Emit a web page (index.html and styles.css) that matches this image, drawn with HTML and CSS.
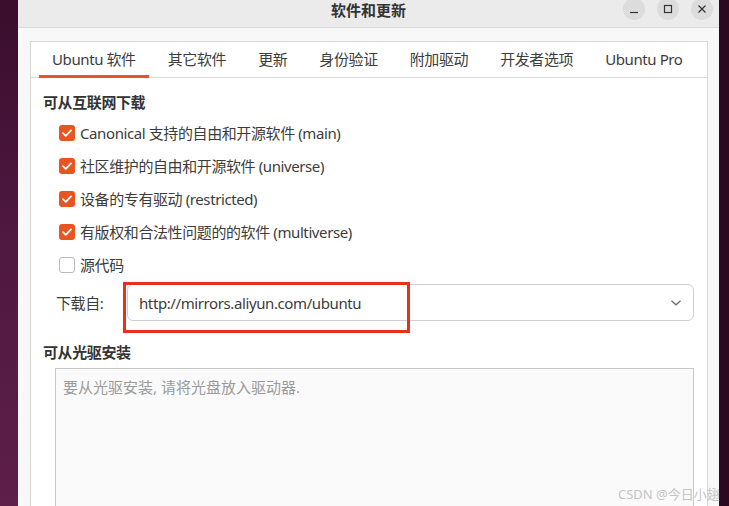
FILE: index.html
```html
<!DOCTYPE html>
<html lang="zh-CN">
<head>
  <meta charset="UTF-8">
  <title>软件和更新</title>
  <link rel="stylesheet" href="styles.css">
</head>
<body>

  <div class="desk-left"></div>

  <div class="window">
    <div class="titlebar">
      <div></div>
      <div class="title">软件和更新</div>
      <div class="controls">
        <span class="ctl">
          <svg width="10" height="10" viewBox="0 0 10 10"><path d="M1 8.5h8" stroke="#333" stroke-width="1.2"/></svg>
        </span>
        <span class="ctl">
          <svg width="10" height="10" viewBox="0 0 10 10"><rect x="1.5" y="1.5" width="7" height="7" fill="none" stroke="#333" stroke-width="1.2"/></svg>
        </span>
        <span class="ctl">
          <svg width="10" height="10" viewBox="0 0 10 10"><path d="M1.5 1.5l7 7M8.5 1.5l-7 7" stroke="#333" stroke-width="1.2"/></svg>
        </span>
      </div>
    </div>

    <div class="window-body">
      <div class="notebook">
        <div class="tabs">
          <div class="tab active">Ubuntu 软件</div>
          <div class="tab">其它软件</div>
          <div class="tab">更新</div>
          <div class="tab">身份验证</div>
          <div class="tab">附加驱动</div>
          <div class="tab">开发者选项</div>
          <div class="tab">Ubuntu Pro</div>
        </div>

        <div class="page">
          <div class="heading">可从互联网下载</div>
          <div class="checks">
            <div class="check-row"><span class="box on"><svg width="16" height="16" viewBox="0 0 16 16"><path d="M4 8.2l2.8 2.6L12 5.4" fill="none" stroke="#fff" stroke-width="1.8" stroke-linecap="round" stroke-linejoin="round"/></svg></span>Canonical 支持的自由和开源软件 (main)</div>
            <div class="check-row"><span class="box on"><svg width="16" height="16" viewBox="0 0 16 16"><path d="M4 8.2l2.8 2.6L12 5.4" fill="none" stroke="#fff" stroke-width="1.8" stroke-linecap="round" stroke-linejoin="round"/></svg></span>社区维护的自由和开源软件 (universe)</div>
            <div class="check-row"><span class="box on"><svg width="16" height="16" viewBox="0 0 16 16"><path d="M4 8.2l2.8 2.6L12 5.4" fill="none" stroke="#fff" stroke-width="1.8" stroke-linecap="round" stroke-linejoin="round"/></svg></span>设备的专有驱动 (restricted)</div>
            <div class="check-row"><span class="box on"><svg width="16" height="16" viewBox="0 0 16 16"><path d="M4 8.2l2.8 2.6L12 5.4" fill="none" stroke="#fff" stroke-width="1.8" stroke-linecap="round" stroke-linejoin="round"/></svg></span>有版权和合法性问题的的软件 (multiverse)</div>
            <div class="check-row"><span class="box"></span>源代码</div>
          </div>

          <div class="source-row">
            <span class="source-label">下载自:</span>
            <div class="combo">
              <span>http://mirrors.aliyun.com/ubuntu</span>
              <svg width="12" height="8" viewBox="0 0 12 8"><path d="M1.5 1.8l4.5 4 4.5-4" fill="none" stroke="#6a6a6a" stroke-width="1.3"/></svg>
            </div>
          </div>

          <div class="heading cd-heading">可从光驱安装</div>
          <div class="cd-box">要从光驱安装, 请将光盘放入驱动器.</div>
        </div>
      </div>
    </div>
  </div>

  <div class="desk-right"></div>

  <!-- annotation drawn over the screenshot -->
  <div class="mark"></div>
  <div class="watermark">CSDN @今日小翅</div>

</body>
</html>
```

FILE: styles.css
```css
body {
  margin: 0;
  width: 729px;
  height: 506px;
  overflow: hidden;
  display: flex;
  position: relative;
  font-family: 'Noto Sans', 'Noto Sans CJK SC', sans-serif;
  font-size: 15px;
  letter-spacing: -0.4px;
  color: #3c3c3c;
  background-color: #2c0b22;
}

.desk-left {
  width: 18px;
  flex-shrink: 0;
  background: linear-gradient(180deg, #3a0d2c 0%, #4e1840 45%, #5e1f4a 100%);
}

.desk-right {
  width: 10px;
  flex-shrink: 0;
  background-color: #2b0a21;
}

.window {
  width: 701px;
  flex-shrink: 0;
  display: flex;
  flex-direction: column;
  background-color: #f8f8f8;
}

.titlebar {
  height: 27px;
  flex-shrink: 0;
  display: grid;
  grid-template-columns: 1fr auto 1fr;
  background-color: #ebebeb;
  border-bottom: 1px solid #d9d9d9;
}

.title {
  font-weight: bold;
  font-size: 15px;
  letter-spacing: 0;
  line-height: 20px;
  color: #333;
}

.controls {
  justify-self: end;
  display: flex;
  gap: 12px;
  margin: -2px 6px 0 0;
}

.ctl {
  width: 22px;
  height: 22px;
  border-radius: 50%;
  background-color: #dcdcdc;
  display: flex;
  align-items: center;
  justify-content: center;
}

.window-body {
  flex: 1;
  min-height: 0;
  display: flex;
  flex-direction: column;
  padding: 13px 11px 0 12px;
}

.notebook {
  flex: 1;
  min-height: 0;
  overflow: hidden;
  background-color: #fff;
  border: 1px solid #d6d6d6;
  border-bottom: none;
}

.tabs {
  display: flex;
  gap: 6px;
  padding: 0 8px;
  border-bottom: 1px solid #dadada;
}

.tab {
  position: relative;
  padding: 0 13px;
  line-height: 35px;
  white-space: nowrap;
}

.tab.active::after {
  content: "";
  position: absolute;
  left: 0;
  right: 0;
  bottom: -1px;
  height: 3px;
  background-color: #e95420;
}

.page {
  padding: 14px 13px 0 12px;
}

.heading {
  font-weight: bold;
  line-height: 20px;
  color: #333;
}

.checks {
  margin-top: 4px;
}

.check-row {
  height: 33px;
  display: flex;
  align-items: center;
  padding-left: 16px;
  white-space: nowrap;
}

.box {
  width: 16px;
  height: 16px;
  margin-right: 5px;
  border-radius: 3px;
  box-sizing: border-box;
  border: 1px solid #bcbcbc;
  background-color: #fff;
  display: flex;
}

.box.on {
  border: none;
  background-color: #e95420;
}

.source-row {
  display: flex;
  align-items: center;
  margin-top: 3px;
}

.source-label {
  width: 84px;
  padding-left: 13px;
  box-sizing: border-box;
  flex-shrink: 0;
}

.combo {
  flex: 1;
  height: 37px;
  box-sizing: border-box;
  border: 1px solid #cfcfcf;
  border-radius: 6px;
  background-color: #fff;
  display: flex;
  align-items: center;
  justify-content: space-between;
  padding: 0 11px 0 11px;
}

.cd-heading {
  margin-top: 21px;
}

.cd-box {
  margin: 6px 0 0 12px;
  height: 160px;
  background-color: #fafafa;
  border: 1px solid #c9c9c9;
  padding: 8px 7px;
  font-size: 15px;
  letter-spacing: 0;
  line-height: 20px;
  color: #9a9a9a;
}

.mark {
  position: absolute;
  left: 123px;
  top: 282px;
  width: 281px;
  height: 45px;
  border: 3px solid #e8301c;
}

.watermark {
  position: absolute;
  left: 618px;
  top: 484px;
  font-size: 13px;
  letter-spacing: 0;
  color: #c4c4c4;
  white-space: nowrap;
}
```
